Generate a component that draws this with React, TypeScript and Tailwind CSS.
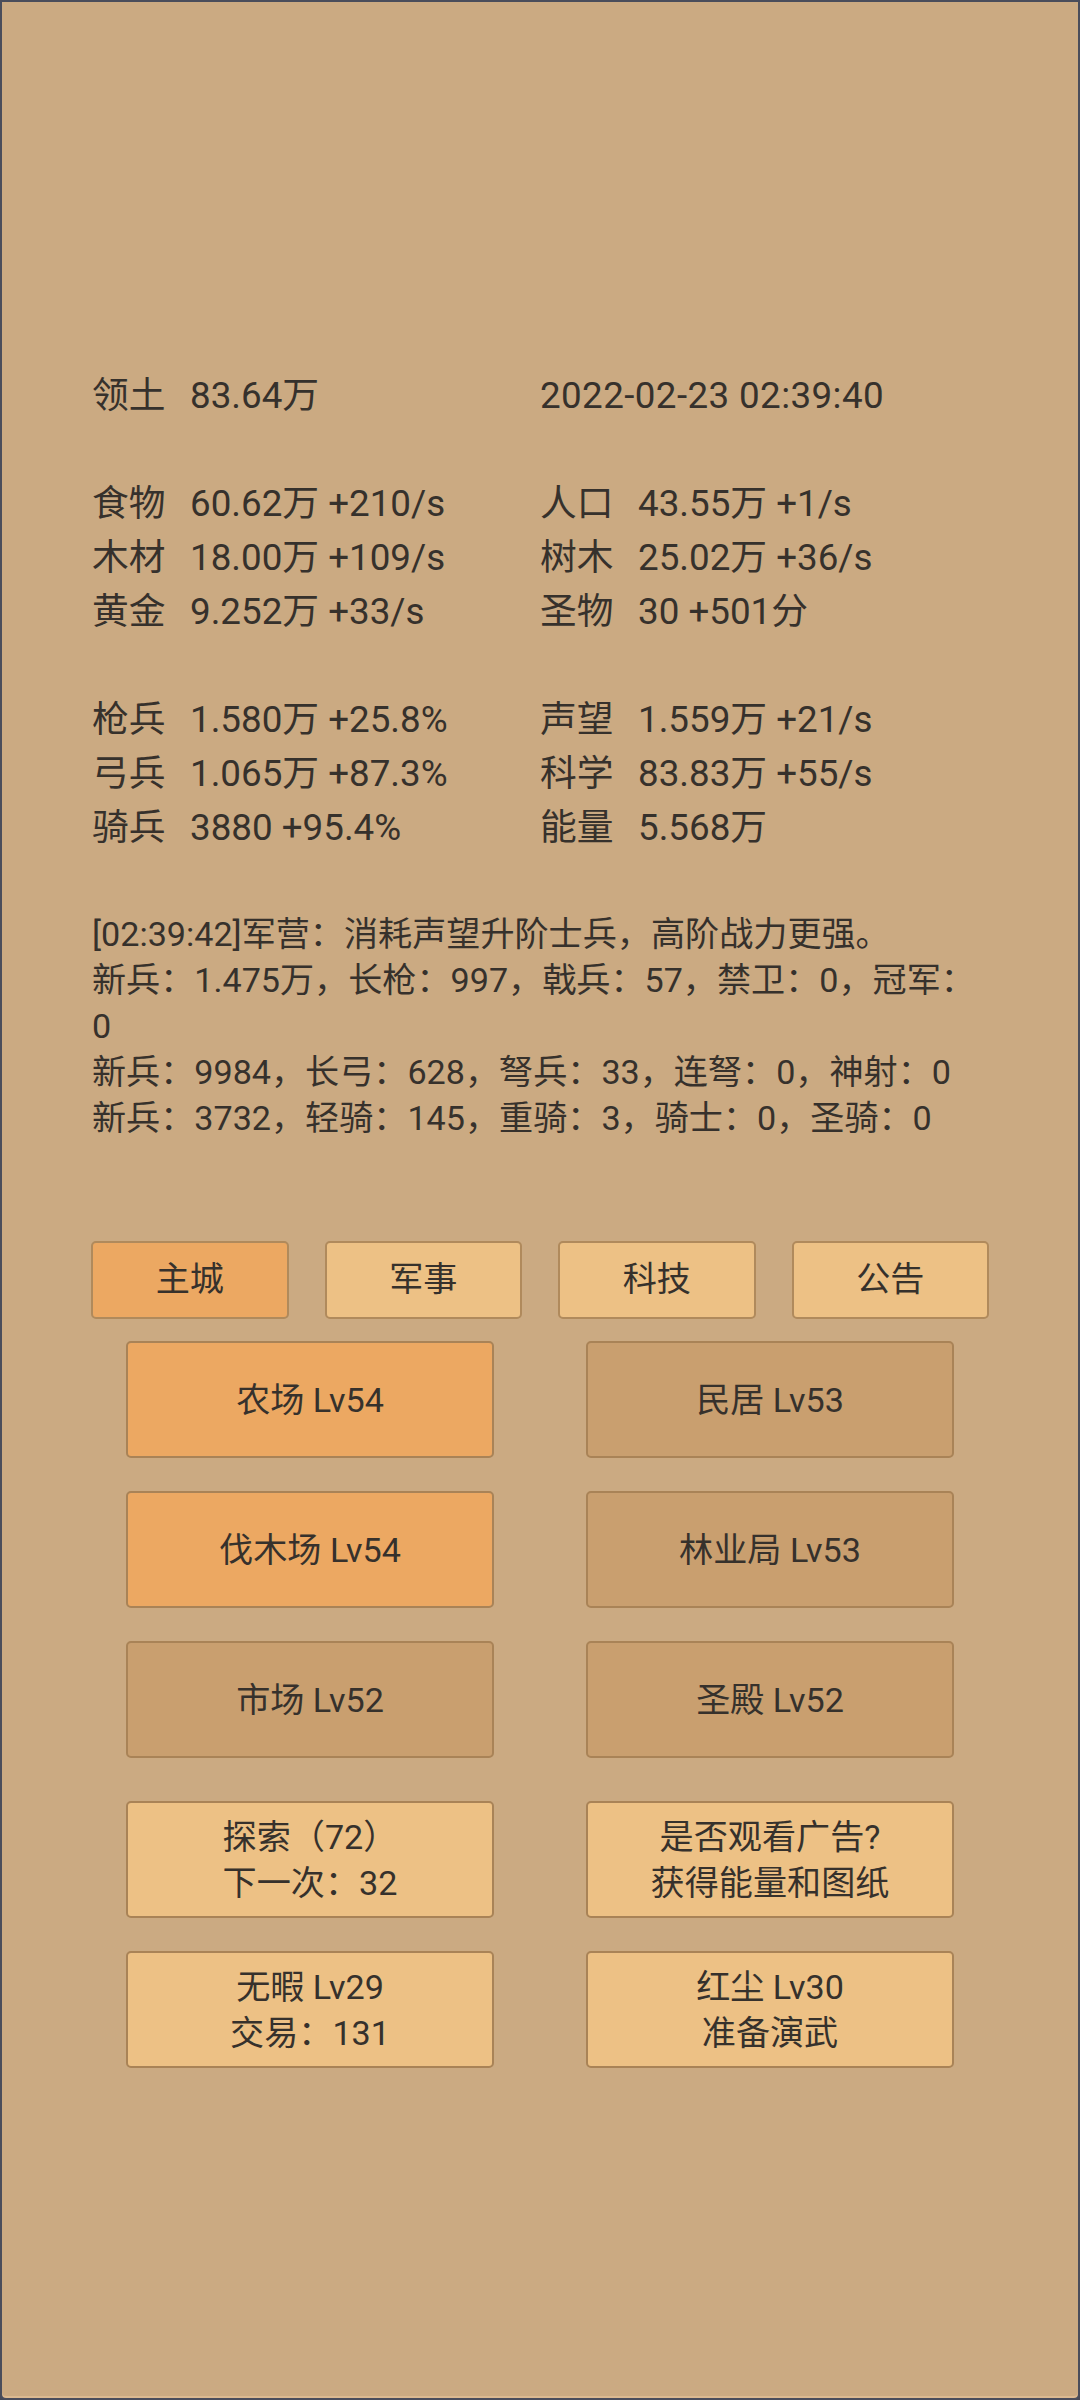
import React from 'react'

const font = { fontFamily: 'Roboto, "Noto Sans CJK SC", sans-serif' }

const stats: [string, string][][] = [
  [['领土', '83.64万'], ['', '2022-02-23 02:39:40']],
  [],
  [['食物', '60.62万 +210/s'], ['人口', '43.55万 +1/s']],
  [['木材', '18.00万 +109/s'], ['树木', '25.02万 +36/s']],
  [['黄金', '9.252万 +33/s'], ['圣物', '30 +501分']],
  [],
  [['枪兵', '1.580万 +25.8%'], ['声望', '1.559万 +21/s']],
  [['弓兵', '1.065万 +87.3%'], ['科学', '83.83万 +55/s']],
  [['骑兵', '3880 +95.4%'], ['能量', '5.568万']],
]

const logLines = [
  '[02:39:42]军营：消耗声望升阶士兵，高阶战力更强。',
  '新兵：1.475万，长枪：997，戟兵：57，禁卫：0，冠军：0',
  '新兵：9984，长弓：628，弩兵：33，连弩：0，神射：0',
  '新兵：3732，轻骑：145，重骑：3，骑士：0，圣骑：0',
]

const tabs = ['主城', '军事', '科技', '公告']

type Btn = { lines: string[]; tone: 'orange' | 'brown' | 'light' }

const buildings: Btn[] = [
  { lines: ['农场 Lv54'], tone: 'orange' },
  { lines: ['民居 Lv53'], tone: 'brown' },
  { lines: ['伐木场 Lv54'], tone: 'orange' },
  { lines: ['林业局 Lv53'], tone: 'brown' },
  { lines: ['市场 Lv52'], tone: 'brown' },
  { lines: ['圣殿 Lv52'], tone: 'brown' },
]

const extras: Btn[] = [
  { lines: ['探索（72）', '下一次：32'], tone: 'light' },
  { lines: ['是否观看广告?', '获得能量和图纸'], tone: 'light' },
  { lines: ['无暇 Lv29', '交易：131'], tone: 'light' },
  { lines: ['红尘 Lv30', '准备演武'], tone: 'light' },
]

function StatCell({ label, value }: { label: string; value: string }) {
  if (!label) {
    return <div className="whitespace-nowrap tracking-[0.4px]">{value}</div>
  }
  return (
    <div className="flex whitespace-nowrap">
      <span className="w-[98px] shrink-0">{label}</span>
      <span>{value}</span>
    </div>
  )
}

function Button({ b }: { b: Btn }) {
  return (
    <div
      className={`h-[117px] flex flex-col items-center justify-center rounded-[5px] border-2 border-[#a98357] text-[34.125px] leading-[46px] ${
        b.tone === 'orange'
          ? 'bg-[#eca862]'
          : b.tone === 'brown'
          ? 'bg-[#c99f6f]'
          : 'bg-[#edc185]'
      }`}
    >
      {b.lines.map((l, j) => (
        <div key={j} className="whitespace-nowrap">{l}</div>
      ))}
    </div>
  )
}

export default function App() {
  return (
    <div className="bg-[#474a58] h-[2400px]" style={font}>
      <div className="h-[2400px] border-2 border-[#4a4d5b] rounded-b-[6px] bg-[#cbaa82] shadow-[inset_0_-2px_0_#dcb990] text-[#36312c] flex flex-col">
        {/* Stats */}
        <div className="pt-[367px] pl-[90px] text-[36.75px] leading-[54px]">
          {stats.map((row, i) =>
            row.length === 0 ? (
              <div key={i} className="h-[54px]" />
            ) : (
              <div key={i} className="grid grid-cols-2 w-[896px]">
                <StatCell label={row[0][0]} value={row[0][1]} />
                <StatCell label={row[1][0]} value={row[1][1]} />
              </div>
            )
          )}
        </div>

        {/* Log */}
        <div className="mt-[56px] px-[90px] text-[34.125px] leading-[46px]">
          {logLines.map((l, i) => (
            <div key={i}>{l}</div>
          ))}
        </div>

        {/* Tabs */}
        <div className="mt-[100px] px-[89px] grid grid-cols-4 gap-x-[36px]">
          {tabs.map((t, i) => (
            <div
              key={t}
              className={`h-[78px] flex items-center justify-center rounded-[5px] border-2 border-[#b08a5c] text-[34.125px] ${
                i === 0 ? 'bg-[#eca862]' : 'bg-[#edc185]'
              }`}
            >
              {t}
            </div>
          ))}
        </div>

        {/* Buildings */}
        <div className="mt-[22px] px-[124px] grid grid-cols-2 gap-x-[92px] gap-y-[33px]">
          {buildings.map((b, i) => (
            <Button key={i} b={b} />
          ))}
        </div>

        {/* Explore / ads / extras */}
        <div className="mt-[43px] px-[124px] grid grid-cols-2 gap-x-[92px] gap-y-[33px]">
          {extras.map((b, i) => (
            <Button key={i} b={b} />
          ))}
        </div>
      </div>
    </div>
  )
}
